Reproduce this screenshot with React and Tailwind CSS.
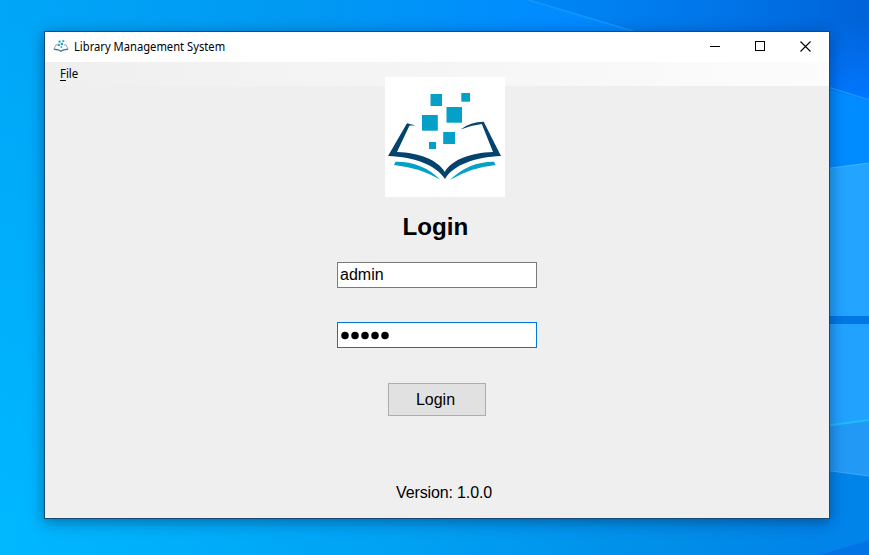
import React from "react";

function BookLogo({ className }) {
  return (
    <svg className={className} viewBox="0 0 120 120" aria-hidden="true">
      <g fill="#05a0c8">
        <rect x="45.5" y="17" width="11.5" height="12" />
        <rect x="76.3" y="16" width="8.7" height="8.7" />
        <rect x="61.5" y="30" width="15.5" height="15.7" />
        <rect x="37" y="38" width="15.8" height="15.7" />
        <rect x="58.2" y="55" width="11.8" height="12" />
        <rect x="44" y="65" width="7" height="7" />
        <path d="M10.5 84.8 Q37 84.5 55 102.5 Q35 90.5 9 87.9 Z" />
        <path d="M109 84.8 Q84 84.5 65 103 Q85 90.5 110.5 87.9 Z" />
      </g>
      <path
        fill="#03436c"
        d="M22 46.2 L30.5 48.5 L24.5 48.6 L12 75 C34 75.5 53 83 59.8 95 C66 83 86 75.5 108 75 L96.8 47 Q86 48 75.5 52.5 Q86 44.7 98.7 44.8 L116 79 C90 80 68 88 60 102 C51 88 30 80 3 79 Z"
      />
    </svg>
  );
}

function BookIcon({ className }) {
  return (
    <svg className={className} viewBox="0 0 16 16" aria-hidden="true">
      <g fill="#16a3cc">
        <rect x="5.6" y="1.6" width="2" height="2" />
        <rect x="9.5" y="1.2" width="1.8" height="1.8" />
        <rect x="7.8" y="3.8" width="2.2" height="2.2" />
        <rect x="4.6" y="4.8" width="2.2" height="2.2" />
        <rect x="7.6" y="7.2" width="1.6" height="1.6" />
      </g>
      <path
        d="M4 5.8 H3 L0.9 9.9 Q6 9.9 8 12.4 Q10 9.9 15.1 9.9 L13 5.8 L11 6.1"
        fill="none"
        stroke="#7f9fb4"
        strokeWidth="0.9"
      />
      <path
        d="M1 10.4 Q6 10.4 8 12.4 Q10 10.4 15 10.4"
        fill="none"
        stroke="#477f9f"
        strokeWidth="1.2"
      />
    </svg>
  );
}

function Wallpaper() {
  return (
    <svg
      className="absolute inset-0 h-full w-full"
      viewBox="0 0 869 555"
      preserveAspectRatio="none"
      aria-hidden="true"
    >
      <defs>
        <linearGradient id="base" x1="0" y1="0" x2="1" y2="0">
          <stop offset="0" stopColor="#00a6f8" />
          <stop offset="0.35" stopColor="#0099f2" />
          <stop offset="0.62" stopColor="#008cff" />
          <stop offset="1" stopColor="#0080fb" />
        </linearGradient>
        <linearGradient id="left" x1="0" y1="0" x2="0" y2="1">
          <stop offset="0" stopColor="#00b8ff" stopOpacity="0" />
          <stop offset="1" stopColor="#00b8ff" />
        </linearGradient>
        <linearGradient id="corner" x1="0" y1="0" x2="1" y2="0">
          <stop offset="0" stopColor="#0088f6" />
          <stop offset="0.6" stopColor="#0074e8" />
          <stop offset="1" stopColor="#0062d8" />
        </linearGradient>
        <linearGradient id="side" x1="0" y1="0" x2="0" y2="1">
          <stop offset="0" stopColor="#0078ff" stopOpacity="0" />
          <stop offset="1" stopColor="#0078ff" />
        </linearGradient>
        <linearGradient id="floor" x1="0" y1="0" x2="1" y2="0">
          <stop offset="0" stopColor="#00b8ff" />
          <stop offset="0.45" stopColor="#00a2f4" />
          <stop offset="0.8" stopColor="#008ce8" />
          <stop offset="1" stopColor="#0080e8" />
        </linearGradient>
      </defs>
      <rect width="869" height="555" fill="url(#base)" />
      <rect width="60" height="555" fill="url(#left)" />
      <path d="M528 0 L869 0 L869 101 L824 88 L634 31 Z" fill="url(#corner)" />
      <path d="M824 20 H869 V101 L824 88 Z" fill="url(#side)" />
      <path d="M528 0 L636 32 M824 86 L869 100" stroke="#1496fc" strokeWidth="1.8" fill="none" />
      <path d="M824 88 L869 101 V163 L824 169 Z" fill="#008cff" />
      <path d="M824 169 L869 163 V316 H824 Z" fill="#22a4ff" />
      <path d="M824 169 L869 163" stroke="#42b5ff" />
      <rect x="824" y="316" width="45" height="8" fill="#0078e4" />
      <path d="M824 324 H869 V420 L824 426 Z" fill="#22a2ff" />
      <path d="M824 426 L869 420 V476 L824 470 Z" fill="#2299f5" />
      <path d="M824 426 L869 420" stroke="#22bbff" strokeWidth="1.8" />
      <rect y="512" width="869" height="43" fill="url(#floor)" />
      <path d="M824 470 L869 476 V555 H824 Z" fill="#0084ea" />
      <path d="M824 470 L869 476" stroke="#41aaf7" />
      <path d="M820 555 L869 540 V555 Z" fill="#0074e4" />
    </svg>
  );
}

function TitleBar() {
  return (
    <header className="flex h-[30px] items-center bg-white pl-2">
      <BookIcon className="h-4 w-4" />
      <span className="ml-[5px] flex-1 font-['Noto_Sans',sans-serif] text-[12px] leading-4">
        <span className="inline-block origin-left scale-x-[0.933] whitespace-nowrap">
          Library Management System
        </span>
      </span>
      <div className="flex h-full">
        <button className="flex w-[46px] items-center justify-center pb-px" aria-label="Minimize">
          <span className="h-px w-[10px] bg-black" />
        </button>
        <button className="flex w-[44px] items-center justify-center pb-[2px]" aria-label="Maximize">
          <span className="size-[10px] border border-black" />
        </button>
        <button className="flex w-[47px] items-center justify-center pb-[2px] pr-px" aria-label="Close">
          <svg className="size-[11px]" viewBox="0 0 11 11" stroke="#000" strokeWidth="1.1">
            <path d="M0.5 0.5 L10.5 10.5 M10.5 0.5 L0.5 10.5" />
          </svg>
        </button>
      </div>
    </header>
  );
}

export default function App() {
  return (
    <div className="relative h-[555px] w-[869px] overflow-hidden font-['Liberation_Sans',sans-serif] text-black">
      <Wallpaper />
      <div className="absolute left-[44px] top-[31px] flex h-[488px] w-[786px] flex-col border border-[#174a70] bg-[#efefef] shadow-[0_3px_14px_rgba(0,25,70,0.45)]">
        <TitleBar />
        <nav className="h-6 bg-linear-to-r from-[#efefef] to-[#fcfcfc] pl-[15px] font-['Noto_Sans',sans-serif] text-[12px] leading-6">
          <span className="inline-block origin-left scale-x-[0.95]">
            <span className="underline underline-offset-2">F</span>ile
          </span>
        </nav>
        <main className="-mt-[9px] flex flex-col">
          <div className="ml-[340px] size-[120px] bg-white">
            <BookLogo className="size-[120px]" />
          </div>
          <h1 className="ml-[357.5px] mt-[15px] text-[24.2px] font-bold leading-[30px]">Login</h1>
          <input
            className="ml-[292px] mt-[20px] h-[26px] w-[200px] border border-[#7a7a7a] bg-white pl-[2px] text-[16px] leading-6 outline-none"
            defaultValue="admin"
          />
          <div className="ml-[292px] mt-[34px] flex h-[26px] w-[200px] items-center border border-[#0078d7] bg-white pl-[3px]">
            <svg className="h-[10px] w-[50px]" viewBox="0 0 50 10" role="img" aria-label="Password">
              <circle cx="4" cy="5.5" r="3.75" />
              <circle cx="14" cy="5.5" r="3.75" />
              <circle cx="24" cy="5.5" r="3.75" />
              <circle cx="34" cy="5.5" r="3.75" />
              <circle cx="44" cy="5.5" r="3.75" />
            </svg>
          </div>
          <button className="ml-[343px] mt-[35px] h-[33px] w-[98px] border border-[#adadad] bg-[#e1e1e1] pr-[3px] text-[16px]">
            Login
          </button>
          <p className="ml-[351px] mt-[65px] text-[16px] leading-6 tracking-[-0.13px]">Version: 1.0.0</p>
        </main>
      </div>
    </div>
  );
}
